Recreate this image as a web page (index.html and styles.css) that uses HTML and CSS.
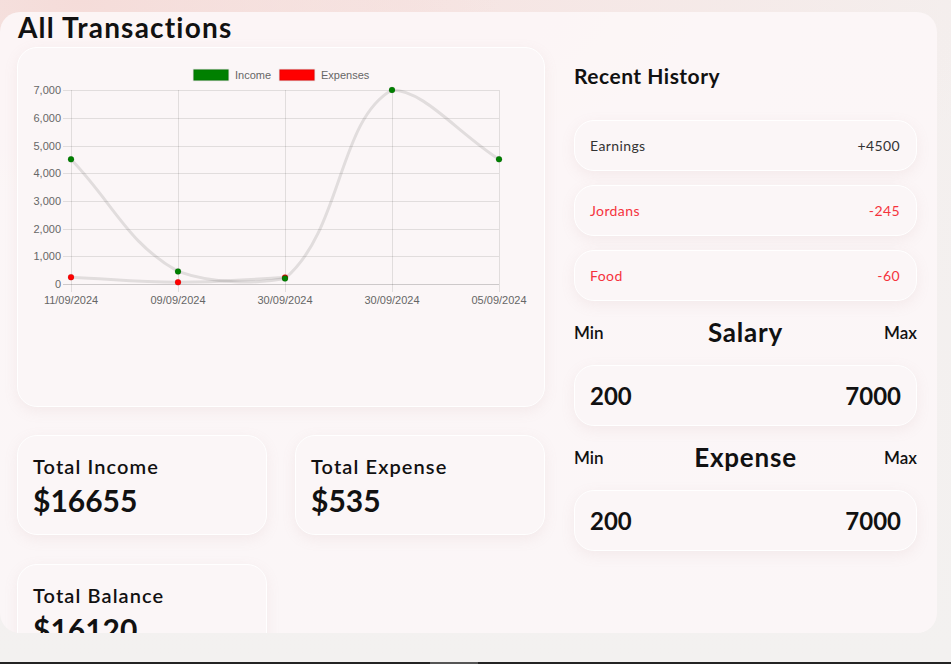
FILE: index.html
```html
<!DOCTYPE html>
<html lang="en">
<head>
<meta charset="utf-8">
<title>All Transactions</title>
<link rel="stylesheet" href="styles.css">
</head>
<body>
<div class="screen">
  <main class="panel">
    <section class="left">
      <h1 class="title">All Transactions</h1>
      <div class="card chart-card">
        <svg class="chart" width="526" height="270" viewBox="18 48 526 270">
          <g class="legend">
            <rect x="193.5" y="69.5" width="35" height="11" fill="#008000" stroke="rgba(0,0,0,0.1)" stroke-width="1.5"/>
            <text x="235" y="79">Income</text>
            <rect x="279.5" y="69.5" width="35" height="11" fill="#ff0000" stroke="rgba(0,0,0,0.1)" stroke-width="1.5"/>
            <text x="321" y="79">Expenses</text>
          </g>
          <g class="grid">
            <line x1="63" y1="90.5" x2="499" y2="90.5"/>
            <line x1="63" y1="118.5" x2="499" y2="118.5"/>
            <line x1="63" y1="146.5" x2="499" y2="146.5"/>
            <line x1="63" y1="173.5" x2="499" y2="173.5"/>
            <line x1="63" y1="201.5" x2="499" y2="201.5"/>
            <line x1="63" y1="229.5" x2="499" y2="229.5"/>
            <line x1="63" y1="256.5" x2="499" y2="256.5"/>
            <line x1="71.5" y1="90" x2="71.5" y2="292"/>
            <line x1="178.5" y1="90" x2="178.5" y2="292"/>
            <line x1="285.5" y1="90" x2="285.5" y2="292"/>
            <line x1="392.5" y1="90" x2="392.5" y2="292"/>
            <line x1="499.5" y1="90" x2="499.5" y2="292"/>
          </g>
          <line class="axis" x1="63" y1="284.5" x2="499" y2="284.5"/>
          <g class="ylabels">
            <text x="61" y="94">7,000</text>
            <text x="61" y="122">6,000</text>
            <text x="61" y="150">5,000</text>
            <text x="61" y="177">4,000</text>
            <text x="61" y="205">3,000</text>
            <text x="61" y="233">2,000</text>
            <text x="61" y="260">1,000</text>
            <text x="61" y="288">0</text>
          </g>
          <g class="xlabels">
            <text x="71" y="304">11/09/2024</text>
            <text x="178" y="304">09/09/2024</text>
            <text x="285" y="304">30/09/2024</text>
            <text x="392" y="304">30/09/2024</text>
            <text x="499" y="304">05/09/2024</text>
          </g>
          <path class="series" d="M71,277.2 C113.8,279.2 135.2,282.2 178,282.3 C220.8,282.4 242.2,279.5 285,277.6"/>
          <g class="dots-exp">
            <circle cx="71" cy="277.2" r="3"/>
            <circle cx="178" cy="282.3" r="3"/>
            <circle cx="285" cy="277.6" r="3"/>
          </g>
          <path class="series" d="M71,159.3 C113.8,204.1 127.4,243.2 178,271.4 C213,284 256.7,284 285,278.5 C342.3,229.9 338.1,120 392,90 C423.7,90 456.2,131.6 499,159.3"/>
          <g class="dots-inc">
            <circle cx="71" cy="159.3" r="3"/>
            <circle cx="178" cy="271.4" r="3"/>
            <circle cx="285" cy="278.5" r="3"/>
            <circle cx="392" cy="90" r="3"/>
            <circle cx="499" cy="159.3" r="3"/>
          </g>
        </svg>
      </div>
      <div class="totals">
        <div class="card total">
          <h2 class="total-label">Total Income</h2>
          <p class="total-value">$16655</p>
        </div>
        <div class="card total">
          <h2 class="total-label">Total Expense</h2>
          <p class="total-value">$535</p>
        </div>
        <div class="card total">
          <h2 class="total-label">Total Balance</h2>
          <p class="total-value">$16120</p>
        </div>
      </div>
    </section>
    <aside class="right">
      <h2 class="history-title">Recent History</h2>
      <ul class="history">
        <li class="card item"><span>Earnings</span><span>+4500</span></li>
        <li class="card item neg"><span>Jordans</span><span>-245</span></li>
        <li class="card item neg"><span>Food</span><span>-60</span></li>
      </ul>
      <div class="range-head"><span class="mm">Min</span><h3 class="range-title">Salary</h3><span class="mm">Max</span></div>
      <div class="card range"><span>200</span><span>7000</span></div>
      <div class="range-head"><span class="mm">Min</span><h3 class="range-title">Expense</h3><span class="mm">Max</span></div>
      <div class="card range"><span>200</span><span>7000</span></div>
    </aside>
  </main>
  <div class="taskbar"><div class="taskbar-thumb"></div></div>
</div>
</body>
</html>
```

FILE: styles.css
```css
* { box-sizing: border-box; }
html, body { margin: 0; padding: 0; }
body {
  width: 951px;
  height: 664px;
  overflow: hidden;
  font-family: "Lato", "Noto Sans", sans-serif;
  color: #111;
  background:
    radial-gradient(ellipse 420px 260px at 80px 0px, #f5dcd9 0%, rgba(245,220,217,0) 100%),
    radial-gradient(ellipse 600px 300px at 400px 0px, #f6e4e2 0%, rgba(246,228,226,0) 100%),
    linear-gradient(180deg, #f4efee 0%, #f3f1f0 100%);
}
.screen {
  height: 664px;
  display: flex;
  flex-direction: column;
}
.panel {
  margin-top: 12px;
  width: 937px;
  height: 621px;
  flex: none;
  border-radius: 20px;
  background: rgba(252, 246, 247, 0.92);
  overflow: hidden;
  display: grid;
  grid-template-columns: 528px 343px;
  column-gap: 29px;
  padding: 0 20px 0 17px;
}
.taskbar {
  margin-top: auto;
  height: 2px;
  background: #232323;
}
.taskbar-thumb {
  margin-left: 430px;
  width: 48px;
  height: 2px;
  background: #555;
}
.card {
  background: #fbf6f7;
  border: 1px solid #ffffff;
  border-radius: 20px;
  box-shadow: 0 4px 14px rgba(190, 150, 150, 0.12);
}
.title {
  margin: 0;
  font-size: 28px;
  font-weight: 700;
  line-height: 30px;
  height: 35px;
  padding-left: 1px;
  letter-spacing: 1.2px;
}
.chart-card {
  height: 360px;
}
.chart { display: block; }
.chart text {
  font-family: "Liberation Sans", Arial, sans-serif;
  font-size: 11px;
  fill: #666;
}
.ylabels text { text-anchor: end; }
.xlabels text { text-anchor: middle; }
.grid line { stroke: rgba(0,0,0,0.1); stroke-width: 1; }
.axis { stroke: rgba(0,0,0,0.18); stroke-width: 1; }
.series { fill: none; stroke: rgba(0,0,0,0.1); stroke-width: 3; }
.dots-inc circle { fill: #008000; stroke: rgba(0,0,0,0.1); stroke-width: 1; }
.dots-exp circle { fill: #ff0000; stroke: rgba(0,0,0,0.1); stroke-width: 1; }
.totals {
  margin-top: 28px;
  display: grid;
  grid-template-columns: 250px 250px;
  column-gap: 28px;
  row-gap: 29px;
  grid-auto-rows: 100px;
}
.total {
  padding: 17px 15px 18px;
}
.total-label {
  margin: 0;
  font-size: 20px;
  font-weight: 600;
  line-height: 26px;
  letter-spacing: 1.1px;
}
.total-value {
  margin: 3px 0 0;
  font-size: 30px;
  font-weight: 700;
  line-height: 36px;
}
.right {
  display: flex;
  flex-direction: column;
}
.history-title {
  margin: 50px 0 0;
  font-size: 21px;
  font-weight: 700;
  line-height: 28px;
  letter-spacing: 0.5px;
}
.history {
  list-style: none;
  margin: 30px 0 0;
  padding: 0;
  display: flex;
  flex-direction: column;
  gap: 14px;
}
.item {
  height: 51px;
  display: flex;
  align-items: center;
  justify-content: space-between;
  padding: 0 16px 0 15px;
  font-size: 14px;
  letter-spacing: 0.4px;
  color: #333;
}
.item.neg { color: #f5333d; }
.range-head {
  display: flex;
  align-items: center;
  justify-content: space-between;
  height: 32px;
  margin-top: 15px;
}
.mm {
  font-size: 17px;
  font-weight: 600;
  width: 40px;
}
.mm:last-child { text-align: right; }
.range-title {
  margin: 0;
  font-size: 26px;
  font-weight: 700;
  letter-spacing: 0.8px;
}
.range {
  margin-top: 17px;
  height: 61px;
  display: flex;
  align-items: center;
  justify-content: space-between;
  padding: 0 15px;
  font-size: 24px;
  font-weight: 700;
}
```
